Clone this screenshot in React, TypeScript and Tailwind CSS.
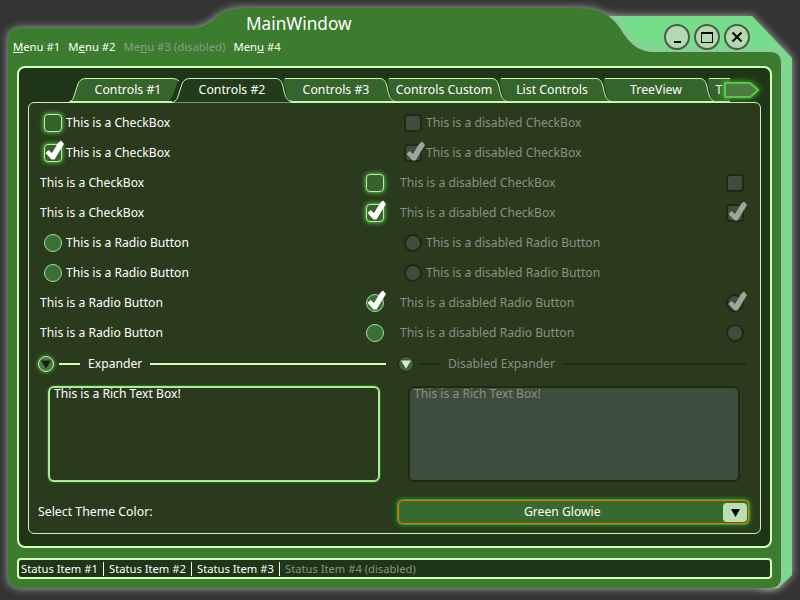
import React from 'react';

const font = "font-['Noto_Sans',sans-serif]";

const CheckMark = ({ disabled }: { disabled?: boolean }) => (
  <svg className="absolute -left-[1px] -top-[1px] overflow-visible" width="18" height="18" viewBox="0 0 18 18">
    <path
      d="M1.5 9 L4.5 6 L8 9 L14 -1 L17 -3.5 L20 0 L10.5 15.5 L7.5 15.5 Z"
      fill={disabled ? '#a0a59c' : '#ffffff'}
    />
  </svg>
);

const CheckBox = ({ checked, disabled }: { checked?: boolean; disabled?: boolean }) => (
  <div
    className={
      disabled
        ? 'relative w-[18px] h-[18px] shrink-0 rounded-[4px] bg-[#3f4e3c] border-2 border-[#1c2a16]'
        : 'relative w-[18px] h-[18px] shrink-0 rounded-[4px] bg-[#35622d] border border-[#b8f0a0] shadow-[0_0_4px_1px_#4fc24a]'
    }
  >
    {checked && <CheckMark disabled={disabled} />}
  </div>
);

const Radio = ({ checked, disabled }: { checked?: boolean; disabled?: boolean }) => (
  <div
    className={
      disabled
        ? 'relative w-[18px] h-[18px] shrink-0 rounded-full bg-[#3f4e3c] border-2 border-[#1c2a16]'
        : 'relative w-[18px] h-[18px] shrink-0 rounded-full bg-[#3a7033] border border-[#a8e098]'
    }
  >
    {checked && <CheckMark disabled={disabled} />}
  </div>
);

const Row = ({
  label,
  mark,
  right,
  disabled,
}: {
  label: string;
  mark: React.ReactNode;
  right?: boolean;
  disabled?: boolean;
}) => (
  <div
    className={
      (right ? 'justify-between pr-[2px] ' : 'pl-[4px] gap-[4px] ') +
      'h-[30px] flex items-center ' +
      (disabled ? 'text-[#8b9086]' : 'text-white')
    }
  >
    {!right && mark}
    <span>{label}</span>
    {right && mark}
  </div>
);

const Expander = ({ label, disabled }: { label: string; disabled?: boolean }) => {
  const line = disabled ? 'h-[2px] bg-[#1a2b13]' : 'h-[2px] bg-[#d4ffb8]';
  return (
    <div className={'h-[32px] flex items-center ' + (disabled ? 'text-[#8b9086]' : 'text-white')}>
      <div
        className={
          disabled
            ? 'w-[16px] h-[16px] ml-[-2px] rounded-full bg-[#4a5a47] border border-[#1c2a16] flex items-center justify-center'
            : 'w-[16px] h-[16px] ml-[-2px] rounded-full bg-[#4f7a48] border-[1.5px] border-[#c0f0a8] shadow-[0_0_4px_#4fc24a] flex items-center justify-center'
        }
      >
        <svg width="10" height="9" viewBox="0 0 10 9">
          <path d="M0 0.5 H10 L5 8.8 Z" fill={disabled ? '#c8f5b0' : '#16240f'} />
        </svg>
      </div>
      <div className={line + ' w-[21px] ml-[5px]'} />
      <span className="px-[8px]">{label}</span>
      <div className={line + ' flex-1'} />
    </div>
  );
};

const leftCol = [
  { label: 'This is a CheckBox', kind: 'box', checked: false, right: false },
  { label: 'This is a CheckBox', kind: 'box', checked: true, right: false },
  { label: 'This is a CheckBox', kind: 'box', checked: false, right: true },
  { label: 'This is a CheckBox', kind: 'box', checked: true, right: true },
  { label: 'This is a Radio Button', kind: 'radio', checked: false, right: false },
  { label: 'This is a Radio Button', kind: 'radio', checked: false, right: false },
  { label: 'This is a Radio Button', kind: 'radio', checked: true, right: true },
  { label: 'This is a Radio Button', kind: 'radio', checked: false, right: true },
];

const Controls = ({ disabled }: { disabled?: boolean }) => (
  <div className="w-[346px]">
    {leftCol.map((r, i) => (
      <Row
        key={i}
        disabled={disabled}
        right={r.right}
        label={disabled ? r.label.replace('is a ', 'is a disabled ') : r.label}
        mark={
          r.kind === 'box' ? (
            <CheckBox checked={r.checked} disabled={disabled} />
          ) : (
            <Radio checked={r.checked} disabled={disabled} />
          )
        }
      />
    ))}
    <Expander label={disabled ? 'Disabled Expander' : 'Expander'} disabled={disabled} />
    <div
      className={
        disabled
          ? 'ml-[8px] mr-[6px] mt-[6px] h-[96px] rounded-[6px] bg-[#3e4e3c] border-2 border-[#1c2a16] px-[4px] text-[#8b9086] leading-[12px]'
          : 'ml-[8px] mr-[6px] mt-[6px] h-[96px] rounded-[6px] border-2 border-[#a8ec94] shadow-[0_0_2px_#4fc24a] px-[4px] text-white leading-[12px]'
      }
    >
      This is a Rich Text Box!
    </div>
  </div>
);

const tabLine = '#c8f5b0';

// each tab draws its own outline, the cell edges are the top corners of the "\" separators
const Tab = ({
  label,
  width,
  path,
  selected,
  fillPath,
}: {
  label: string;
  width: number;
  path: string;
  fillPath: string;
  selected?: boolean;
}) => (
  <div
    className={
      (selected ? 'z-10 ' : '') + 'relative h-[25px] pb-[2px] shrink-0 flex items-center justify-center text-white'
    }
    style={{ width }}
  >
    <svg className="absolute left-0 top-0 overflow-visible" width={width} height="25">
      <path d={fillPath} fill={selected ? '#233b1a' : '#35652d'} />
      <path d={path} fill="none" stroke={tabLine} strokeWidth="1" />
    </svg>
    <span className="relative">{label}</span>
  </div>
);

const rightTab = (w: number) => ({
  path: `M1 0.5 H${w - 8} Q${w - 3} 0.5 ${w - 1} 8 Q${w + 1} 23.5 ${w + 8} 23.5 H2`,
  fillPath: `M-1 0.5 H${w - 8} Q${w - 3} 0.5 ${w - 1} 8 Q${w + 1} 23.5 ${w + 8} 23.5 H9 Q3 23.5 1 10 Z`,
});

const Tabs = () => (
  <div className="absolute left-[57px] top-[10px] flex text-[12.3px]">
    <Tab
      label="Controls #1"
      width={104}
      path="M-6.5 23.5 Q-3 23.5 -1 15 L2 6 Q4 0.5 10 0.5 H96 Q101 0.5 103 3 M-6.5 23.5 H96"
      fillPath="M-6.5 23.5 Q-3 23.5 -1 15 L2 6 Q4 0.5 10 0.5 H96 Q101 0.5 102 3 L98 14 Q95 23.5 90 23.5 Z"
    />
    <Tab
      label="Controls #2"
      width={104}
      selected
      path="M-6.5 23.5 Q-3 23.5 -1 15 L2 6 Q4 0.5 10 0.5 H96 Q101 0.5 103 8 Q105 23.5 112 23.5"
      fillPath="M-6.5 24.5 Q-3 23.5 -1 15 L2 6 Q4 0.5 10 0.5 H96 Q101 0.5 103 8 Q105 23.5 112 24.5 Z"
    />
    <Tab label="Controls #3" width={104} {...rightTab(104)} />
    <Tab label="Controls Custom" width={112} {...rightTab(112)} />
    <Tab label="List Controls" width={104} {...rightTab(104)} />
    <Tab label="TreeView" width={104} {...rightTab(104)} />
    {/* the next tab runs under the scroll button */}
    <Tab label="T" width={22} path="M1 0.5 H22 M8 23.5 H22" fillPath="M-1 0.5 H22 V23.5 H9 Q3 23.5 1 10 Z" />
  </div>
);

const Status = ({ label, disabled }: { label: string; disabled?: boolean }) => (
  <span className={disabled ? 'text-[#8b9086]' : 'w-[77px] text-white'}>{label}</span>
);
const Sep = () => <div className="w-[1px] h-[14px] bg-white" />;

const Menu = ({ pre, key_, post, disabled }: { pre: string; key_: string; post: string; disabled?: boolean }) => (
  <span className={disabled ? 'text-[#8f9c8c]' : 'text-white'}>
    {pre}
    <span className="underline">{key_}</span>
    {post}
  </span>
);

const WinButton = ({ children }: { children: React.ReactNode }) => (
  <div className="w-[26px] h-[26px] rounded-full bg-[#b5d9ae] border-2 border-[#4c5a48] flex items-center justify-center">
    {children}
  </div>
);

export default function App() {
  return (
    <div className={font + ' relative w-[800px] h-[600px] bg-[#333333] overflow-hidden text-[12.15px] leading-[16px]'}>
      {/* window outline */}
      <svg className="absolute left-0 top-0" width="800" height="600" viewBox="0 0 800 600">
        <defs>
          <filter id="glow" x="-10%" y="-10%" width="120%" height="120%">
            <feDropShadow dx="0" dy="0" stdDeviation="4" floodColor="#b0b0b0" />
          </filter>
        </defs>
        <path filter="url(#glow)" d="M605 16 H752 L792 58 V575 L778 588 H760 V60 H640 Z" fill="#76de8b" />
        <path
          filter="url(#glow)"
          d="M8 40 Q8 28 20 28 H190 Q205 28 215 18 Q225 8 245 8 H575 C600 8 610 14 620 28 C630 45 640 52 655 52 H770 Q781 52 781 63 V577 Q781 588 770 588 H20 Q8 588 8 576 Z"
          fill="#3b7c2e"
        />
      </svg>

      <div className="relative w-full h-full flex flex-col">
        <div className="h-[66px] flex justify-between shrink-0">
          <div>
            <div className="pl-[246px] pt-[12px] text-[17.2px] leading-[24px] text-white">MainWindow</div>
            <div className="pl-[13px] pt-[3px] flex gap-[8px] text-[11.3px]">
              <Menu pre="" key_="M" post="enu #1" />
              <Menu pre="M" key_="e" post="nu #2" />
              <Menu pre="Me" key_="n" post="u #3 (disabled)" disabled />
              <Menu pre="Men" key_="u" post=" #4" />
            </div>
          </div>
          <div className="flex gap-[4px] pt-[24px] pr-[50px]">
            <WinButton>
              <div className="w-[7px] h-[2px] bg-black mt-[10px]" />
            </WinButton>
            <WinButton>
              <div className="w-[12px] h-[11px] border border-black border-t-2" />
            </WinButton>
            <WinButton>
              <svg width="12" height="12" viewBox="0 0 12 12">
                <path d="M1.5 1.5 L10.5 10.5 M10.5 1.5 L1.5 10.5" stroke="#000" strokeWidth="2" />
              </svg>
            </WinButton>
          </div>
        </div>

        <div className="relative mx-[17px] w-[755px] h-[482px] rounded-[8px] border-2 border-[#d4ffb8] bg-[#1f3517] px-[9px] pt-[34px] shrink-0">
          <Tabs />
          <div className="w-[733px] h-[432px] rounded-[6px] border border-[#c8f5b0] bg-[#2a3a1c] pt-[5px] px-[11px]">
            <div className="flex gap-[14px]">
              <Controls />
              <Controls disabled />
            </div>
            <div className="flex items-center mt-[18px]">
              <span className="w-[360px] -ml-[2px] text-[12.3px] text-white">Select Theme Color:</span>
              <div className="relative w-[352px] h-[24px] rounded-[5px] border border-[#f07000] bg-[#386a30] shadow-[0_0_0_1px_#3f9a35,0_0_4px_2px_#2f7a2a] flex items-center justify-center text-white">
                <span className="pr-[22px]">Green Glowie</span>
                <div className="absolute right-[1px] top-[2px] w-[24px] h-[19px] rounded-[4px] bg-[#b8e0b0] flex items-center justify-center">
                  <svg width="9" height="8" viewBox="0 0 9 8">
                    <path d="M0 0 H9 L4.5 8 Z" fill="#000" />
                  </svg>
                </div>
              </div>
            </div>
          </div>
          {/* tab scroll button */}
          <svg
            className="absolute left-[703px] top-[12px] overflow-visible drop-shadow-[0_0_3px_#4fd040]"
            width="38"
            height="20"
            viewBox="0 0 38 20"
          >
            <path
              d="M3 3 H28 L36 10 L28 17 H3 Z"
              fill="#4c7c3e"
              stroke="#58c84c"
              strokeWidth="2"
              strokeLinejoin="round"
            />
          </svg>
        </div>

        <div className="mx-[17px] mt-[10px] w-[755px] h-[21px] rounded-[4px] border-2 border-[#d4ffb8] bg-[#1f3517] flex items-center pl-[2px] gap-[5px] text-[11.2px]">
          <Status label="Status Item #1" />
          <Sep />
          <Status label="Status Item #2" />
          <Sep />
          <Status label="Status Item #3" />
          <Sep />
          <Status label="Status Item #4 (disabled)" disabled />
        </div>
      </div>
    </div>
  );
}
